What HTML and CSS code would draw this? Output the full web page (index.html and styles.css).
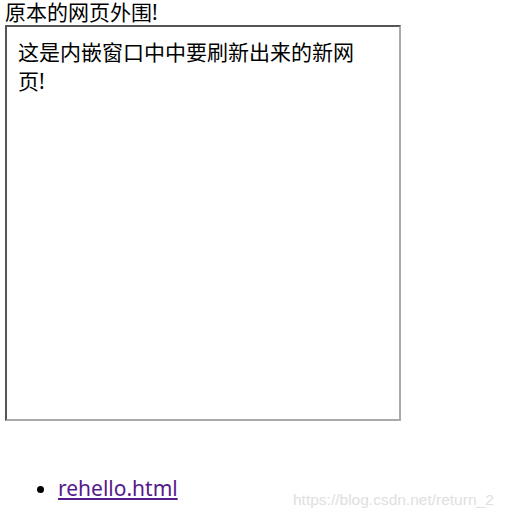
FILE: index.html
```html
<!DOCTYPE html>
<html lang="zh">
<head>
<meta charset="utf-8">
<link rel="stylesheet" href="styles.css">
</head>
<body>
<div class="outer-text">原本的网页外围!</div>
<div class="frame">
  <div class="frame-body">这是内嵌窗口中中要刷新出来的新网页!</div>
</div>
<ul class="links">
  <li><a href="#" class="link">rehello.html</a></li>
</ul>
<div class="watermark">https://blog.csdn.net/return_2</div>
</body>
</html>
```

FILE: styles.css
```css
html, body {
  margin: 0;
  padding: 0;
  background: #fff;
}
body {
  padding-left: 5px;
  font-family: "Noto Sans", "Noto Sans CJK SC", sans-serif;
  font-size: 21px;
  color: #000;
  width: 500px;
  height: 520px;
  box-sizing: border-box;
  position: relative;
}
.outer-text {
  line-height: 25px;
  white-space: nowrap;
}
.frame {
  width: 396px;
  height: 396px;
  box-sizing: border-box;
  border-style: solid;
  border-width: 2px;
  border-color: #555 #aaa #aaa #555;
}
.frame-body {
  padding: 11px 0 0 11px;
  width: 345px;
  line-height: 29px;
}
.links {
  margin: 53px 0 0 0;
  padding-left: 53px;
  line-height: 29px;
}
.link {
  color: #551a8b;
  text-decoration: underline;
}
.watermark {
  position: absolute;
  left: 293px;
  top: 491px;
  font-family: "Liberation Sans", Arial, sans-serif;
  font-size: 15.5px;
  color: #e0e0e0;
  white-space: nowrap;
}
```
